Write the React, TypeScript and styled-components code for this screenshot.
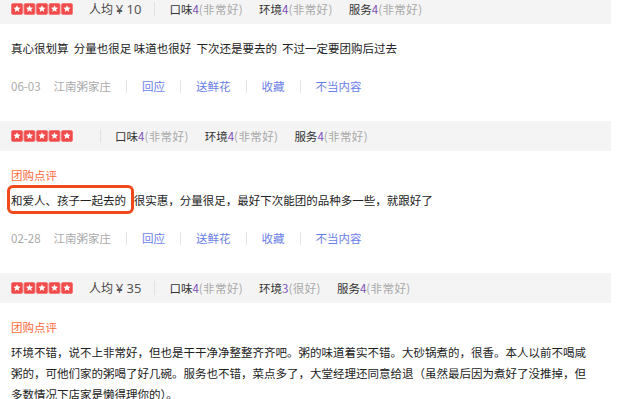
import styled, { createGlobalStyle } from "styled-components";

const GlobalStyle = createGlobalStyle`
  body {
    margin: 0;
    background: #fff;
    font-family: "Noto Sans CJK SC", "Noto Sans", sans-serif;
    font-size: 11.5px;
    color: #333;
  }
`;

type Score = { name: string; value: number; label: string };

type Review = {
  price?: number;
  scores: Score[];
  tuan?: boolean;
  lines: React.ReactNode;
  date: string;
};

const good = (name: string, value = 4, label = "非常好") => ({ name, value, label });

const getReviews = (): Review[] => [
  {
    price: 10,
    scores: [good("口味"), good("环境"), good("服务")],
    lines: "真心很划算\u00a0\u00a0分量也很足 味道也很好\u00a0\u00a0下次还是要去的\u00a0\u00a0不过一定要团购后过去",
    date: "06-03",
  },
  {
    scores: [good("口味"), good("环境"), good("服务")],
    tuan: true,
    lines: (
      <>
        <Marked>和爱人、孩子一起去的</Marked>
        {"\u00a0\u00a0\u00a0很实惠，分量很足，最好下次能团的品种多一些，就跟好了"}
      </>
    ),
    date: "02-28",
  },
  {
    price: 35,
    scores: [good("口味"), good("环境", 3, "很好"), good("服务")],
    tuan: true,
    lines: (
      <>
        环境不错，说不上非常好，但也是干干净净整整齐齐吧。粥的味道着实不错。大砂锅煮的，很香。本人以前不喝咸
        <br />
        粥的，可他们家的粥喝了好几碗。服务也不错，菜点多了，大堂经理还同意给退（虽然最后因为煮好了没推掉，但
        <br />
        多数情况下店家是懒得理你的）。
      </>
    ),
    date: "",
  },
];

const Star = ({ x }: { x: number }) => (
  <g transform={`translate(${x},0)`}>
    <rect x="0.5" y="0.5" width="11" height="11" rx="1.5" fill="#f04a4a" stroke="#f37a7a" />
    <path
      d="M6 2.2l1.05 2.4 2.55.2-1.95 1.65.6 2.5L6 7.6 3.75 8.95l.6-2.5L2.4 4.8l2.55-.2z"
      fill="#fff"
    />
  </g>
);

const Stars = () => (
  <StarsSvg width="62" height="12" viewBox="0 0 62 12">
    {[0, 1, 2, 3, 4].map((i) => (
      <Star key={i} x={i * 12.5} />
    ))}
  </StarsSvg>
);

const links = ["回应", "送鲜花", "收藏", "不当内容"];

export default function App() {
  const reviews = getReviews();
  return (
    <Page>
      <GlobalStyle />
      {reviews.map((r, i) => (
        <Item key={i}>
          <Bar>
            <Stars />
            {r.price !== undefined && (
              <Price>
                人均 <Money>¥ {r.price}</Money>
              </Price>
            )}
            <BarSep $wide={r.price === undefined} />
            {r.scores.map((s) => (
              <ScoreItem key={s.name}>
                {s.name}
                <ScoreNum>{s.value}</ScoreNum>
                <ScoreLabel>({s.label})</ScoreLabel>
              </ScoreItem>
            ))}
          </Bar>
          <Body>
            {r.tuan && <Tag>团购点评</Tag>}
            <Text>{r.lines}</Text>
            {r.date && (
              <Footer>
                <Muted>{r.date}</Muted>
                <Shop>江南粥家庄</Shop>
                {links.map((l) => (
                  <FooterLink key={l}>
                    <Pipe />
                    <Link>{l}</Link>
                  </FooterLink>
                ))}
              </Footer>
            )}
          </Body>
        </Item>
      ))}
    </Page>
  );
}

const Page = styled.div`
  width: 611px;
  margin-top: -6px;
`;

const Item = styled.div`
  display: flex;
  flex-direction: column;
`;

const Bar = styled.div`
  height: 30px;
  background: #f4f4f4;
  display: flex;
  align-items: center;
  padding-left: 11px;
`;

const StarsSvg = styled.svg`
  display: block;
  margin-right: 16px;
`;

const Price = styled.span`
  color: #444;
  font-size: 12px;
`;

const Money = styled.span`
  color: #555;
  font-size: 13px;
  font-family: "Noto Sans", "Noto Sans CJK SC", sans-serif;
`;

const BarSep = styled.span<{ $wide?: boolean }>`
  width: 1px;
  height: 14px;
  background: #e2e2e2;
  margin: 0 14px 0 ${(p) => (p.$wide ? "11px" : "13px")};
`;

const ScoreItem = styled.span`
  color: #333;
  margin-right: 16px;
  white-space: nowrap;
`;

const ScoreNum = styled.span`
  color: #8050b8;
`;

const ScoreLabel = styled.span`
  color: #aaa;
  letter-spacing: 0.4px;
`;

const Body = styled.div`
  padding: 14px 11px 25px;
`;

const Tag = styled.div`
  color: #ff6a3d;
  line-height: 20px;
  margin-bottom: 5px;
`;

const Text = styled.div`
  line-height: 21px;
  color: #222;
  white-space: nowrap;
`;

const Marked = styled.span`
  position: relative;
  &::after {
    content: "";
    position: absolute;
    left: -4px;
    right: -8px;
    top: -7px;
    bottom: -6px;
    border: 3px solid #f04a1c;
    border-radius: 6px;
  }
`;

const Footer = styled.div`
  display: flex;
  align-items: center;
  line-height: 20px;
  margin-top: 17px;
`;

const Muted = styled.span`
  color: #aaa;
`;

const Shop = styled(Muted)`
  margin-left: 13px;
`;

const FooterLink = styled.span`
  display: flex;
  align-items: center;
`;

const Pipe = styled.span`
  width: 1px;
  height: 13px;
  background: #e4e4e4;
  margin: 0 15px;
`;

const Link = styled.span`
  color: #6a7ee8;
`;
